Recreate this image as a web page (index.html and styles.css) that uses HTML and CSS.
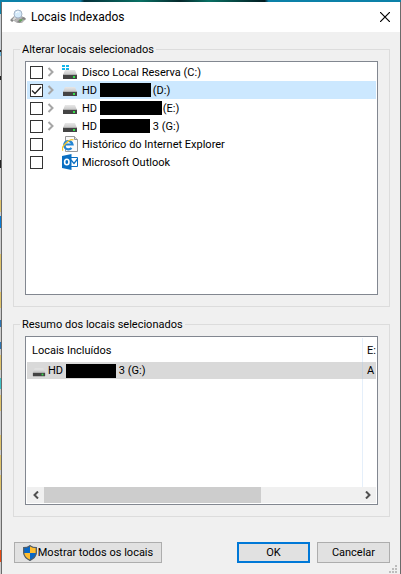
FILE: index.html
```html
<!DOCTYPE html>
<html lang="pt-BR">
<head>
<meta charset="utf-8">
<title>Locais Indexados</title>
<link rel="stylesheet" href="styles.css">
</head>
<body>
<svg class="defs" aria-hidden="true">
  <linearGradient id="lid" x1="0" y1="0" x2="0" y2="1"><stop offset="0" stop-color="#e8e8e8"/><stop offset="1" stop-color="#c4c4c4"/></linearGradient>
  <symbol id="drive" viewBox="0 0 16 16">
    <path d="M3 5h10l2 5H1z" fill="url(#lid)"/>
    <path d="M1 10h14v4H1z" fill="#444"/>
    <path d="M1 9h14v1H1z" fill="#b0b0b0"/>
    <path d="M11 11h2v2h-2z" fill="#35e04a"/>
  </symbol>
  <symbol id="chevron" viewBox="0 0 8 10">
    <path d="M1.500 1l4 4-4 4" fill="none" stroke="#a6a6a6" stroke-width="2"/>
  </symbol>
</svg>
<main class="window" role="dialog" aria-labelledby="title">
  <header class="titlebar">
    <svg class="app-icon" viewBox="0 0 16 16" aria-hidden="true">
      <path d="M1 10l3-3h8l4 3-4 4H7z" fill="#b5b5b5"/>
      <path d="M0 11l4-3 2 2-4 3zM7 13l3-3 2 1-2 3zM11 9l3-1 2 2-2 1z" fill="#858585"/>
      <path d="M9 11l3-1 1 1-3 2z" fill="#64a35d"/>
      <path d="M6 8l-3 3" stroke="#ddd" stroke-width="2"/>
      <circle cx="8" cy="5" r="4" fill="#d5eafa" stroke="#a5b4c7"/>
      <path d="M6 4q1-2 3-1" fill="none" stroke="#fff"/>
    </svg>
    <h1 id="title">Locais Indexados</h1>
    <button class="close" aria-label="Fechar"><svg viewBox="0 0 10 10"><path d="M0 0l10 10M10 0L0 10" stroke="#000" stroke-width="1.200"/></svg></button>
  </header>

  <form class="content">
    <fieldset>
      <legend>Alterar locais selecionados</legend>
      <ul class="box tree">
        <li>
          <input type="checkbox" id="c"><button type="button" class="expand" aria-label="Expandir"><svg><use href="#chevron"/></svg></button>
          <label for="c"><svg class="icon" viewBox="0 0 16 16"><use href="#drive" y="1"/><path d="M0 1h3v2H0zM4 1h3v2H4zM0 4h3v2H0zM4 4h3v2H4z" fill="#16b6ea"/></svg>Disco Local Reserva (C:)</label>
        </li>
        <li class="selected">
          <input type="checkbox" id="d" checked><button type="button" class="expand" aria-label="Expandir"><svg><use href="#chevron"/></svg></button>
          <label for="d"><svg class="icon"><use href="#drive"/></svg>HD <span class="mask mask-d"></span>(D:)</label>
        </li>
        <li>
          <input type="checkbox" id="e"><button type="button" class="expand" aria-label="Expandir"><svg><use href="#chevron"/></svg></button>
          <label for="e"><svg class="icon"><use href="#drive"/></svg>HD <span class="mask mask-e"></span>(E:)</label>
        </li>
        <li>
          <input type="checkbox" id="g"><button type="button" class="expand" aria-label="Expandir"><svg><use href="#chevron"/></svg></button>
          <label for="g"><svg class="icon"><use href="#drive"/></svg>HD <span class="mask mask-g"></span>3 (G:)</label>
        </li>
        <li>
          <input type="checkbox" id="ie"><span class="expand"></span>
          <label for="ie"><svg class="icon" viewBox="0 0 16 16"><path d="M3.500.5h9l3 3v12h-12z" fill="#fafafa" stroke="#999"/><path d="M12.500.5v3h3" fill="#ddd" stroke="#999"/><path d="M2 8.500h8.500a4.200 4.200 0 1 0-1 3.500" fill="none" stroke="#2385d4" stroke-width="2.200"/><path d="M1 14.500C-2 11 8 2 11.500 4" fill="none" stroke="#f3c52b" stroke-width="1.400"/></svg>Histórico do Internet Explorer</label>
        </li>
        <li>
          <input type="checkbox" id="ol"><span class="expand"></span>
          <label for="ol"><svg class="icon" viewBox="0 0 16 16"><path d="M8 3.500h7.500v9H8z" fill="#fff" stroke="#0a6fc2"/><path d="M9 6l3 3.500L15.500 5" fill="none" stroke="#0a6fc2" stroke-width="1.300"/><path d="M0 2l9.500-2v16L0 14z" fill="#0a6fc2"/><ellipse cx="4.800" cy="8" rx="2.200" ry="2.800" fill="none" stroke="#fff" stroke-width="1.600"/></svg>Microsoft Outlook</label>
        </li>
      </ul>
    </fieldset>

    <fieldset>
      <legend>Resumo dos locais selecionados</legend>
      <div class="box summary">
        <table>
          <colgroup><col><col class="col-excluded"></colgroup>
          <thead><tr><th>Locais Incluídos</th><th>E:</th></tr></thead>
          <tbody>
            <tr class="row"><td><span class="cell"><svg class="icon small"><use href="#drive"/></svg>HD <span class="mask mask-s"></span>3 (G:)</span></td><td>A</td></tr>
            <tr class="rest"><td></td><td></td></tr>
          </tbody>
        </table>
        <div class="scrollbar">
          <button type="button" aria-label="Rolar para a esquerda"><svg viewBox="0 0 6 8"><path d="M5 .5L1.500 4 5 7.500" fill="none" stroke="#505050" stroke-width="2"/></svg></button>
          <div class="track"><div class="thumb"></div></div>
          <button type="button" aria-label="Rolar para a direita"><svg viewBox="0 0 6 8"><path d="M1 .5L4.500 4 1 7.500" fill="none" stroke="#505050" stroke-width="2"/></svg></button>
        </div>
      </div>
    </fieldset>

    <footer class="actions">
      <button type="button" class="btn show-all"><svg viewBox="0 0 14 16" aria-hidden="true"><path d="M7 .5Q9.500 2.500 13.500 2.500V8q-.5 5-6.500 7.500Q1 13 .5 8V2.500Q4.500 2.500 7 .5z" fill="#0867c6"/><path d="M7 .5Q9.500 2.500 13.500 2.500V8H7zM.5 8H7v7.500Q1 13 .5 8z" fill="#ffbd2e"/><path d="M7 .7Q9.500 2.700 13.300 2.700V8q-.5 4.800-6.300 7.300Q1.200 12.800.7 8V2.700Q4.500 2.700 7 .7z" fill="none" stroke="#535d66" stroke-width="1.300"/></svg>Mostrar todos os locais</button>
      <button type="button" class="btn primary">OK</button>
      <button type="button" class="btn">Cancelar</button>
    </footer>
  </form>
  <svg class="grip" viewBox="0 0 8 8" aria-hidden="true"><path d="M6 0h2v2H6zM3 3h2v2H3zM6 3h2v2H6zM0 6h2v2H0zM3 6h2v2H3zM6 6h2v2H6z" fill="#bdbdbd"/></svg>
</main>
</body>
</html>
```
FILE: styles.css
```css
* { box-sizing: border-box; }

body {
  margin: 0;
  min-height: 100vh;
  display: flex;
  padding: 2px 0 0 1px;
  font: 11px/15px Roboto, "Liberation Sans", sans-serif;
  color: #000;
  background:
    linear-gradient(90deg, #0c81a8 20%, #03303a 21%, #087064 35%, #05272b 45%, #087064 52%, #021b20 66%, #0c81a8 67%) top / 100% 2px no-repeat,
    linear-gradient(#0c81a8 0 14px, #c9ced3 14px 50px, #222 50px 52px, #65b5dc 52px 56px, #ccc 56px 76px, #222 76px 80px, #ccc 80px 160px, #222 160px 168px, #ccc 168px 200px, #dfc36b 200px 212px, #ccc 212px 216px, #087bd4 216px 228px, #ccc 228px 254px, #dfc36b 254px 270px, #ccc 270px 292px, #dfc36b 292px 308px, #ccc 308px 320px, #2c74b2 320px 327px, #ccc 327px 342px, #2c74b2 342px 349px, #ccc 349px 355px, #dfc36b 355px 370px, #ccc 370px 378px, #3fc1c5 378px 389px, #ccc 389px 395px, #dfc36b 395px 411px, #ccc 411px 435px, #dfc36b 435px 450px, #ccc 450px 455px, #dfc36b 455px 470px, #ccc 470px 475px, #dfc36b 475px 490px, #ccc 490px 550px, #e84b13 550px 562px, #ccc 562px);
}

.defs { position: absolute; width: 0; height: 0; }

.window {
  position: relative;
  flex: 1;
  display: flex;
  flex-direction: column;
  border: solid #6b6b6b;
  border-width: 0 1px;
  background: #f0f0f0;
}

.titlebar {
  display: flex;
  align-items: center;
  height: 30px;
  padding: 0 10px 0 8px;
  background: #fff;
}
.app-icon { width: 16px; height: 16px; }
h1 {
  flex: 1;
  margin: 0 0 0 5px;
  font-size: 12px;
  font-weight: normal;
}

button { font: inherit; color: inherit; }
.close, .expand, .scrollbar button {
  display: flex;
  align-items: center;
  justify-content: center;
  padding: 0;
  border: 0;
  background: none;
}
.close svg { width: 10px; height: 10px; }

.content {
  flex: 1;
  display: flex;
  flex-direction: column;
  padding: 10px 10px 11px 11px;
}

fieldset {
  min-width: 0;
  margin: 0 0 10px;
  padding: 4px 6px 11px;
  border: 1px solid #dcdcdc;
}
legend { padding: 0 2px; }

.box {
  margin: 0 5px;
  padding: 1px;
  border: 1px solid #828790;
  background: #fff;
}

.tree { height: 234px; list-style: none; }
.tree li {
  display: flex;
  align-items: center;
  height: 18px;
  padding-left: 3px;
}
.tree .selected { background: #cce8ff; }
.tree label { display: flex; align-items: center; white-space: pre; }

input[type="checkbox"] {
  appearance: none;
  width: 13px;
  height: 13px;
  margin: 0;
  border: 1px solid #333;
  background: #fff;
}
input[type="checkbox"]:checked {
  background: #fff url("data:image/svg+xml,%3Csvg xmlns='http://www.w3.org/2000/svg' viewBox='0 0 11 11'%3E%3Cpath d='M1 5.500l3 3L10 2' fill='none' stroke='%23222' stroke-width='1.300'/%3E%3C/svg%3E");
}

.expand { width: 16px; height: 18px; margin-right: 3px; }
.expand svg { width: 8px; height: 10px; }
.icon { width: 16px; height: 16px; margin-right: 4px; }
.icon.small { width: 14px; height: 14px; margin-right: 2px; }

.mask { height: 14px; margin-right: 2px; background: #000; }
.mask-d { width: 51px; }
.mask-e { width: 62px; margin-right: 1px; }
.mask-g { width: 50px; margin-right: 3px; }
.mask-s { width: 50px; margin-right: 3px; }

table {
  width: 100%;
  table-layout: fixed;
  border-collapse: separate;
  border-spacing: 0;
}
.col-excluded { width: 13px; }
th, td {
  padding: 0 0 0 5px;
  overflow: hidden;
  font-weight: normal;
  text-align: left;
  white-space: nowrap;
}
th:first-child, td:first-child { border-right: 1px solid #e5effa; }
th:last-child, td:last-child { padding-left: 4px; }
th { height: 24px; }
.row { background: #d9d9d9; }
.row td { height: 17px; }
.row td:first-child { border-right-color: #c8d3de; }
.rest td { height: 108px; }
.cell { display: flex; align-items: center; white-space: pre; }

.scrollbar { display: flex; height: 16px; background: #f0f0f0; }
.scrollbar button { width: 17px; }
.scrollbar svg { width: 6px; height: 8px; }
.track { flex: 1; }
.thumb { width: 69%; height: 100%; background: #cdcdcd; }

.actions { display: flex; gap: 7px; margin: 15px 0 0 1px; }
.btn {
  display: flex;
  align-items: center;
  justify-content: center;
  width: 73px;
  height: 21px;
  padding: 0;
  border: 1px solid #adadad;
  background: #e1e1e1;
}
.primary { border: 2px solid #0078d7; }
.show-all { width: 148px; margin-right: auto; }
.show-all svg { width: 14px; height: 16px; margin-right: 1px; }

.grip {
  position: absolute;
  right: 3px;
  bottom: 1px;
  width: 8px;
  height: 8px;
}
```
